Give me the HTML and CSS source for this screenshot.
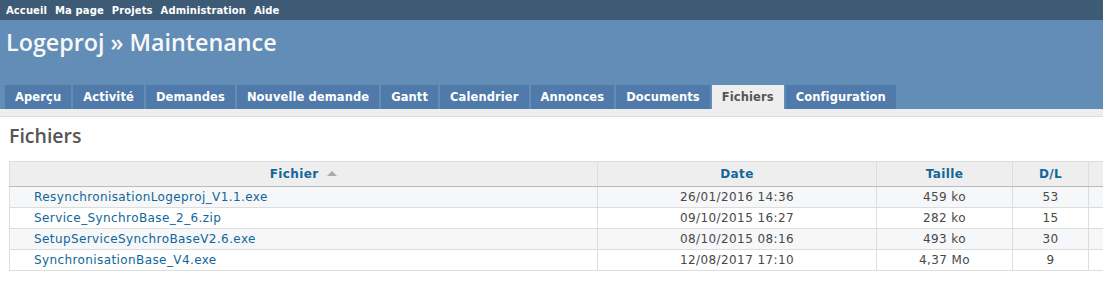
FILE: index.html
```html
<!DOCTYPE html>
<html lang="fr">
<head>
    <meta charset="UTF-8">
    <title>Fichiers - Logeproj » Maintenance</title>
    <link rel="stylesheet" href="styles.css">
</head>
<body>
    <div id="top-menu">
        <a href="#">Accueil</a>
        <a href="#">Ma page</a>
        <a href="#">Projets</a>
        <a href="#">Administration</a>
        <a href="#">Aide</a>
    </div>
    <div id="header">
        <h1>Logeproj » Maintenance</h1>
        <ul class="tabs">
            <li><a href="#">Aperçu</a></li>
            <li><a href="#">Activité</a></li>
            <li><a href="#">Demandes</a></li>
            <li><a href="#">Nouvelle demande</a></li>
            <li><a href="#">Gantt</a></li>
            <li><a href="#">Calendrier</a></li>
            <li><a href="#">Annonces</a></li>
            <li><a href="#">Documents</a></li>
            <li><a href="#" class="selected">Fichiers</a></li>
            <li><a href="#">Configuration</a></li>
        </ul>
    </div>
    <div id="main">
        <div id="content">
            <h2>Fichiers</h2>
            <table class="list files">
                <thead>
                    <tr>
                        <th class="col-file"><a href="#">Fichier</a> <span class="sort-asc"></span></th>
                        <th class="col-date"><a href="#">Date</a></th>
                        <th class="col-size"><a href="#">Taille</a></th>
                        <th class="col-dl"><a href="#">D/L</a></th>
                        <th class="col-extra"></th>
                    </tr>
                </thead>
                <tbody>
                    <tr class="odd">
                        <td class="filename"><a href="#">ResynchronisationLogeproj_V1.1.exe</a></td>
                        <td>26/01/2016 14:36</td>
                        <td>459 ko</td>
                        <td>53</td>
                        <td></td>
                    </tr>
                    <tr class="even">
                        <td class="filename"><a href="#">Service_SynchroBase_2_6.zip</a></td>
                        <td>09/10/2015 16:27</td>
                        <td>282 ko</td>
                        <td>15</td>
                        <td></td>
                    </tr>
                    <tr class="odd">
                        <td class="filename"><a href="#">SetupServiceSynchroBaseV2.6.exe</a></td>
                        <td>08/10/2015 08:16</td>
                        <td>493 ko</td>
                        <td>30</td>
                        <td></td>
                    </tr>
                    <tr class="even">
                        <td class="filename"><a href="#">SynchronisationBase_V4.exe</a></td>
                        <td>12/08/2017 17:10</td>
                        <td>4,37 Mo</td>
                        <td>9</td>
                        <td></td>
                    </tr>
                </tbody>
            </table>
        </div>
    </div>
</body>
</html>
```

FILE: styles.css
```css
body {
    font-family: "DejaVu Sans", Verdana, sans-serif;
    font-size: 12px;
    color: #484848;
    margin: 0;
    padding: 0;
    background-color: #fff;
    overflow: hidden;
}
a {
    color: #169;
    text-decoration: none;
}
#top-menu {
    background-color: #3E5B76;
    height: 20px;
    padding-left: 6px;
    display: flex;
    align-items: center;
    gap: 8px;
    font-size: 10px;
    letter-spacing: 0.1px;
    font-weight: bold;
}
#top-menu a {
    color: #fff;
}
#header {
    background-color: #628DB6;
    height: 89px;
    display: flex;
    flex-direction: column;
    justify-content: space-between;
}
#header h1 {
    font-family: "Open Sans", "Trebuchet MS", sans-serif;
    font-size: 23.3px;
    font-weight: 600;
    color: #f8f8f8;
    margin: 0;
    padding: 5px 0 0 6px;
    line-height: 34px;
}
.tabs {
    list-style: none;
    margin: 0;
    padding: 0 0 0 5px;
    display: flex;
    gap: 2px;
}
.tabs a {
    display: block;
    height: 24px;
    line-height: 24px;
    padding: 0 10px;
    background-color: #507AAA;
    color: #fff;
    font-weight: bold;
    font-size: 11.5px;
    letter-spacing: 0.1px;
}
.tabs a.selected {
    background-color: #eee;
    color: #555;
}
#main {
    background-color: #eee;
    padding-top: 7px;
}
#content {
    background-color: #fff;
    border-top: 1px solid #ddd;
    padding: 5px 0 20px 9px;
    min-height: 200px;
}
#content h2 {
    font-family: "Open Sans", "Trebuchet MS", sans-serif;
    font-size: 19.5px;
    font-weight: 600;
    color: #555;
    margin: 0 0 11px 0;
    line-height: 28px;
}
table.list {
    border-collapse: collapse;
    border: 1px solid #ddd;
    table-layout: fixed;
    width: 1160px;
    font-size: 12px;
    letter-spacing: 0.4px;
}
table.list th {
    background-color: #eee;
    height: 24px;
    padding: 0;
    border: 1px solid #ddd;
    border-bottom: 1px solid #bbb;
    font-weight: bold;
    text-align: center;
}
table.list td {
    height: 20px;
    padding: 0;
    border: 1px solid #ddd;
    text-align: center;
}
table.list tr.odd {
    background-color: #f6f7f8;
}
table.list td.filename {
    text-align: left;
    padding-left: 24px;
}
.col-file { width: 587px; }
.col-date { width: 278px; }
.col-size { width: 135px; }
.col-dl { width: 75px; }
.sort-asc {
    display: inline-block;
    width: 0;
    height: 0;
    margin-left: 4px;
    border-left: 5px solid transparent;
    border-right: 5px solid transparent;
    border-bottom: 5px solid #aaa;
    vertical-align: 2px;
}
```
